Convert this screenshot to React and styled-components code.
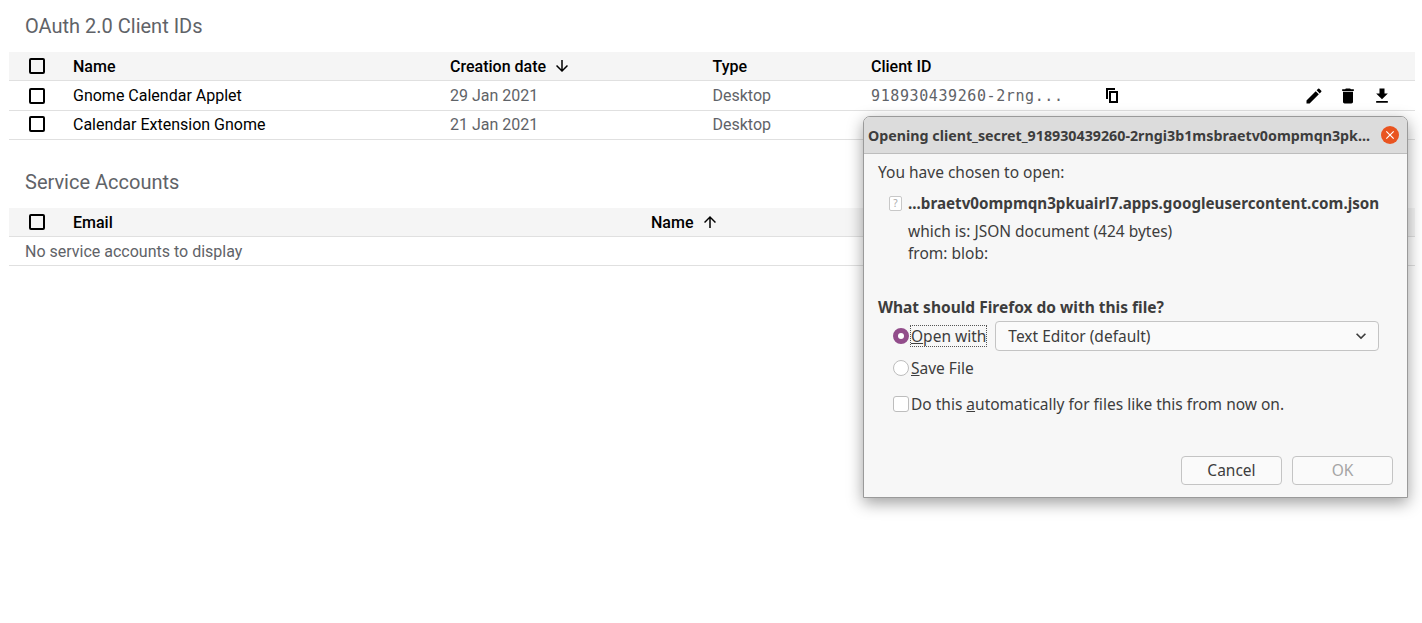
import React from 'react';
import styled, { createGlobalStyle } from 'styled-components';
import {
  MdArrowDownward,
  MdArrowUpward,
  MdDelete,
  MdEdit,
  MdFileDownload,
  MdExpandMore,
  MdClose,
} from 'react-icons/md';

const GlobalStyle = createGlobalStyle`
  html, body {
    margin: 0;
    background: #fff;
    font-family: Roboto, sans-serif;
  }
`;

const Page = styled.div`
  position: relative;
  height: 623px;
  overflow: hidden;
  padding: 0 7px 0 9px;
`;

const SectionTitle = styled.h2`
  margin: 0;
  height: ${({ $first }) => ($first ? '52px' : '68px')};
  padding-left: 16px;
  padding-top: ${({ $first }) => ($first ? '15px' : '31px')};
  box-sizing: border-box;
  font-size: 20px;
  line-height: 23px;
  font-weight: 400;
  color: #5f6368;
`;

const Row = styled.div`
  display: grid;
  grid-template-columns: ${({ $columns }) => $columns};
  align-items: center;
  height: ${({ $height }) => $height}px;
  padding-bottom: ${({ $lift }) => ($lift ? '2px' : '0')};
  box-sizing: border-box;
  border-bottom: 1px solid #e0e0e0;
  background: ${({ $head }) => ($head ? '#f5f5f5' : '#fff')};
  font-size: 16px;
  color: ${({ $head }) => ($head ? '#000' : '#5f6368')};
  font-weight: ${({ $head }) => ($head ? 500 : 400)};
`;

const CheckCell = styled.span`
  display: flex;
  padding-left: 20px;
`;

const CheckBox = styled.span`
  display: block;
  width: 16px;
  height: 16px;
  box-sizing: border-box;
  border: 2px solid #000;
  border-radius: 2px;
`;

const NameCell = styled.span`
  color: #000;
`;

const HeadCell = styled.span`
  display: flex;
  align-items: center;
  gap: ${({ $gap }) => $gap}px;
`;

const ClientCell = styled.span`
  display: flex;
  align-items: center;
  padding-right: 23px;
  color: #000;
`;

const ClientId = styled.span`
  width: 235px;
  font-family: 'DejaVu Sans Mono', monospace;
  font-size: 15px;
  letter-spacing: 0.6px;
  color: #5f6368;
`;

const Actions = styled.span`
  margin-left: auto;
  display: flex;
  gap: 14px;
`;

const EmptyNote = styled.div`
  display: flex;
  align-items: center;
  height: 29px;
  box-sizing: border-box;
  padding-left: 16px;
  border-bottom: 1px solid #e0e0e0;
  font-size: 16px;
  color: #5f6368;
`;

const Dialog = styled.div`
  position: absolute;
  left: 863px;
  top: 116px;
  width: 545px;
  height: 382px;
  box-sizing: border-box;
  display: flex;
  flex-direction: column;
  background: #f7f7f7;
  border: 1px solid #9a9a9a;
  border-radius: 7px 7px 0 0;
  box-shadow: 0 5px 16px rgba(0, 0, 0, 0.38);
  font-family: 'Noto Sans', sans-serif;
  font-size: 15.5px;
  color: #3d3d3d;
`;

const TitleBar = styled.div`
  display: flex;
  align-items: center;
  justify-content: space-between;
  height: 37px;
  flex: none;
  box-sizing: border-box;
  padding: 0 8px 0 4px;
  background: #dcdcdc;
  border-bottom: 1px solid #bdbdbd;
  border-radius: 6px 6px 0 0;
  font-size: 14.25px;
  font-weight: 700;
  white-space: nowrap;
`;

const CloseButton = styled.span`
  display: flex;
  align-items: center;
  justify-content: center;
  width: 18px;
  height: 18px;
  border-radius: 50%;
  background: #e95420;
  color: #fff;
`;

const DialogBody = styled.div`
  flex: 1;
  display: flex;
  flex-direction: column;
  padding: 8px 14px 12px 14px;
`;

const Line = styled.div`
  line-height: 20px;
`;

const FileRow = styled.div`
  display: flex;
  align-items: center;
  gap: 6px;
  margin: 11px 0 7px 11px;
  font-size: 15.2px;
  font-weight: 700;
  line-height: 20px;
  white-space: nowrap;
`;

const FileIcon = styled.span`
  display: flex;
  align-items: center;
  justify-content: center;
  width: 13px;
  height: 15px;
  box-sizing: border-box;
  border: 1px solid #c8c8c8;
  border-radius: 2px;
  background: #fff;
  color: #aaa;
  font-size: 10px;
  font-weight: 400;
`;

const FileInfo = styled.div`
  padding-left: 30px;
  line-height: 22px;
`;

const Question = styled.div`
  margin-top: 33px;
  font-weight: 700;
  line-height: 20px;
`;

const OptionRow = styled.div`
  display: flex;
  align-items: center;
  padding-left: 15px;
  margin-top: ${({ $gap }) => $gap}px;
`;

const Radio = styled.span`
  width: 16px;
  height: 16px;
  box-sizing: border-box;
  flex: none;
  border-radius: 50%;
  background: ${({ $on }) => ($on ? '#924d8b' : '#fff')};
  border: ${({ $on }) => ($on ? '5px solid #924d8b' : '1px solid #bdbdbd')};

  &::after {
    content: '';
    display: ${({ $on }) => ($on ? 'block' : 'none')};
    width: 6px;
    height: 6px;
    border-radius: 50%;
    background: #fff;
  }
`;

const Check = styled.span`
  width: 16px;
  height: 16px;
  box-sizing: border-box;
  flex: none;
  border: 1px solid #bdbdbd;
  border-radius: 3px;
  background: #fff;
`;

const OptionLabel = styled.span`
  margin-left: 1px;
  line-height: 20px;
  white-space: nowrap;
  border: 1px dotted ${({ $focus }) => ($focus ? '#555' : 'transparent')};
`;

const Select = styled.div`
  display: flex;
  align-items: center;
  justify-content: space-between;
  width: 384px;
  height: 30px;
  margin-left: 8px;
  box-sizing: border-box;
  padding: 0 7px 0 12px;
  background: #fafafa;
  border: 1px solid #c4c4c4;
  border-radius: 4px;
`;

const Buttons = styled.div`
  margin-top: auto;
  display: flex;
  justify-content: flex-end;
  gap: 10px;
`;

const Button = styled.span`
  display: flex;
  align-items: center;
  justify-content: center;
  width: 101px;
  height: 29px;
  box-sizing: border-box;
  padding-bottom: 1px;
  background: #fafafa;
  border: 1px solid #c4c4c4;
  border-radius: 4px;
  color: ${({ $disabled }) => ($disabled ? '#a5a5a5' : '#3d3d3d')};
`;

const CopyIcon = () => (
  <svg width="12" height="15" viewBox="0 0 12 15" fill="currentColor">
    <path d="M0 0h9v2H2v9H0z" />
    <path fillRule="evenodd" d="M3 3h9v12H3z M5 5v8h5V5z" />
  </svg>
);

const clientColumns = '64px 377px 262.5px 158.5px 1fr';
const serviceColumns = '64px 578px 1fr';

const clients = [
  { name: 'Gnome Calendar Applet', date: '29 Jan 2021', id: '918930439260-2rng...', height: 30 },
  { name: 'Calendar Extension Gnome', date: '21 Jan 2021', height: 29, lift: true },
];

const App = () => (
  <>
    <GlobalStyle />
    <Page>
      <SectionTitle $first>OAuth 2.0 Client IDs</SectionTitle>
      <Row $head $height={29} $columns={clientColumns}>
        <CheckCell><CheckBox /></CheckCell>
        <span>Name</span>
        <HeadCell $gap={7}>Creation date <MdArrowDownward size={18} /></HeadCell>
        <span>Type</span>
        <span>Client ID</span>
      </Row>
      {clients.map((client) => (
        <Row key={client.name} $height={client.height} $lift={client.lift} $columns={clientColumns}>
          <CheckCell><CheckBox /></CheckCell>
          <NameCell>{client.name}</NameCell>
          <span>{client.date}</span>
          <span>Desktop</span>
          {client.id && (
            <ClientCell>
              <ClientId>{client.id}</ClientId>
              <CopyIcon />
              <Actions>
                <MdEdit size={20} />
                <MdDelete size={20} />
                <MdFileDownload size={20} />
              </Actions>
            </ClientCell>
          )}
        </Row>
      ))}

      <SectionTitle>Service Accounts</SectionTitle>
      <Row $head $height={29} $columns={serviceColumns}>
        <CheckCell><CheckBox /></CheckCell>
        <span>Email</span>
        <HeadCell $gap={8}>Name <MdArrowUpward size={18} /></HeadCell>
      </Row>
      <EmptyNote>No service accounts to display</EmptyNote>

      <Dialog>
        <TitleBar>
          <span>Opening client_secret_918930439260-2rngi3b1msbraetv0ompmqn3pk...</span>
          <CloseButton><MdClose size={14} /></CloseButton>
        </TitleBar>
        <DialogBody>
          <Line>You have chosen to open:</Line>
          <FileRow>
            <FileIcon>?</FileIcon>
            ...braetv0ompmqn3pkuairl7.apps.googleusercontent.com.json
          </FileRow>
          <FileInfo>
            which is: JSON document (424 bytes)
            <br />
            from: blob:
          </FileInfo>
          <Question>What should Firefox do with this file?</Question>
          <OptionRow $gap={4}>
            <Radio $on />
            <OptionLabel $focus><u>O</u>pen with</OptionLabel>
            <Select>
              Text Editor (default)
              <MdExpandMore size={20} />
            </Select>
          </OptionRow>
          <OptionRow $gap={6}>
            <Radio />
            <OptionLabel><u>S</u>ave File</OptionLabel>
          </OptionRow>
          <OptionRow $gap={14}>
            <Check />
            <OptionLabel>Do this <u>a</u>utomatically for files like this from now on.</OptionLabel>
          </OptionRow>
          <Buttons>
            <Button>Cancel</Button>
            <Button $disabled>OK</Button>
          </Buttons>
        </DialogBody>
      </Dialog>
    </Page>
  </>
);

export default App;
